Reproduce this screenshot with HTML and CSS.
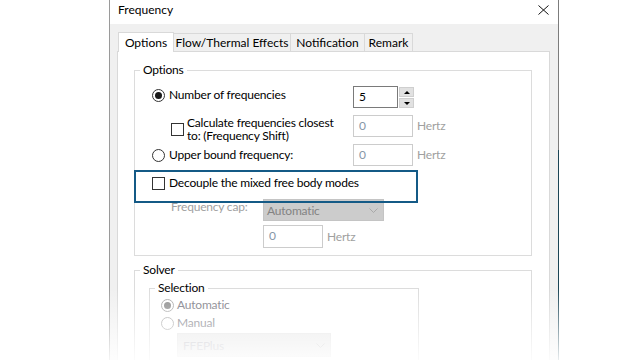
FILE: index.html
```html
<!DOCTYPE html>
<html>
<head>
<meta charset="utf-8">
<title>Frequency</title>
<link rel="stylesheet" href="styles.css">
</head>
<body>
<div class="screen">
  <div class="window">
    <div class="edge-left"></div>
    <div class="win-main">
      <div class="titlebar">
        <span class="title">Frequency</span>
        <svg class="close" width="11" height="10" viewBox="0 0 11 10"><path d="M0.5 0.5 L10.5 9.5 M10.5 0.5 L0.5 9.5" stroke="#111" stroke-width="1" fill="none"/></svg>
      </div>
      <div class="client">
        <div class="tabs">
          <div class="tab active t-options">Options</div>
          <div class="tab t-flow">Flow/Thermal Effects</div>
          <div class="tab t-notif">Notification</div>
          <div class="tab t-remark">Remark</div>
        </div>
        <div class="panel">
          <fieldset class="group options">
            <legend>Options</legend>
            <div class="row r1">
              <div class="col1">
                <label class="opt"><span class="radio checked"></span>Number of frequencies</label>
              </div>
              <div class="spin">
                <div class="field">5</div>
                <div class="spin-btns"><span class="sb"><span class="arr up"></span></span><span class="sb"><span class="arr down"></span></span></div>
              </div>
            </div>
            <div class="row r2">
              <div class="col1">
                <label class="chk-opt two"><span class="check"></span><span class="two-line">Calculate frequencies closest<br>to: (Frequency Shift)</span></label>
              </div>
              <div class="unit-input"><div class="field dis">0</div><span class="unit">Hertz</span></div>
            </div>
            <div class="row r3">
              <div class="col1">
                <label class="opt"><span class="radio"></span>Upper bound frequency:</label>
              </div>
              <div class="unit-input"><div class="field dis">0</div><span class="unit">Hertz</span></div>
            </div>
            <div class="row r4">
              <label class="opt"><span class="check"></span>Decouple the mixed free body modes</label>
              <div class="highlight"></div>
            </div>
            <div class="row r5">
              <div class="cap-label">Frequency cap:</div>
              <div class="combo dis-combo"><span>Automatic</span><svg width="9" height="5" viewBox="0 0 9 5"><path d="M0.5 0.5 L4.5 4.5 L8.5 0.5" fill="none" stroke="#a9a9a9"/></svg></div>
            </div>
            <div class="row r6">
              <div class="unit-input"><div class="field dis">0</div><span class="unit">Hertz</span></div>
            </div>
          </fieldset>
          <fieldset class="group solver">
            <legend>Solver</legend>
            <div class="solver-body">
              <fieldset class="group selection">
                <legend>Selection</legend>
                <div class="selection-body">
                  <label class="opt sm dis-opt auto"><span class="radio checked dis"></span>Automatic</label>
                  <label class="opt sm dis-opt manual"><span class="radio dis"></span>Manual</label>
                  <div class="combo ffe"><span>FFEPlus</span><svg width="9" height="5" viewBox="0 0 9 5"><path d="M0.5 0.5 L4.5 4.5 L8.5 0.5" fill="none" stroke="#c4c4c4"/></svg></div>
                </div>
              </fieldset>
            </div>
          </fieldset>
        </div>
      </div>
    </div>
    <div class="edge-right"></div>
  </div>
  <div class="fade"></div>
</div>
</body>
</html>
```
FILE: styles.css
```css
* { box-sizing: border-box; }
html, body { margin: 0; padding: 0; }
body {
  width: 640px;
  height: 360px;
  overflow: hidden;
  background: #fff;
  font-family: "Lato", "Noto Sans", sans-serif;
  font-size: 12px;
  color: #000;
}
.screen { position: relative; width: 640px; height: 360px; overflow: hidden; }
.window { display: flex; margin-left: 109px; width: 450px; height: 360px; }
.edge-left { width: 1px; flex: none; background: #9a9a9a; }
.edge-right { width: 1px; flex: none; background: linear-gradient(#7c7c7c 0, #7c7c7c 150px, #1b4556 150px, #1b4556 100%); }
.win-main { flex: 1; display: flex; flex-direction: column; background: #f0f0f0; min-width: 0; }

.titlebar {
  height: 24px; flex: none; background: #fff;
  display: flex; align-items: flex-start; justify-content: space-between;
  padding: 2px 9px 0 8px;
}
.title { line-height: 16px; }
.close { margin-top: 3px; }

.client { flex: 1; display: flex; flex-direction: column; padding: 0 8px 0 7px; }
.tabs { display: flex; align-items: flex-start; height: 18px; margin-top: 9px; padding-left: 1px; position: relative; z-index: 1; flex: none; }
.tab {
  height: 18px; line-height: 16px;
  display: flex; align-items: center; justify-content: center;
  border: 1px solid #d9d9d9; border-bottom: none; border-left: none;
  background: #f0f0f0; white-space: nowrap;
}
.tab.active { height: 20px; margin-top: -1px; background: #fff; border-left: 1px solid #d9d9d9; }
.t-options { width: 56px; }
.t-flow { width: 117px; }
.t-notif { width: 74px; }
.t-remark { width: 48px; }

.panel { flex: 1; background: #fff; border: 1px solid #d9d9d9; padding: 10px 17px 0 16px; letter-spacing: -0.2px; }

fieldset.group { border: 1px solid #dcdcdc; margin: 0; padding: 0; min-width: 0; }
fieldset.group > legend { padding: 0 3px; margin-left: 5px; line-height: 16px; }
fieldset.options { padding-bottom: 7px; }

.row { display: flex; align-items: flex-start; }
.col1 { width: 218px; flex: none; }
.opt { display: flex; align-items: center; gap: 4px; line-height: 16px; padding-left: 17px; white-space: nowrap; }
.chk-opt { display: flex; align-items: center; gap: 3px; padding-left: 36px; white-space: nowrap; }
.two-line { line-height: 13px; }

.radio {
  width: 13px; height: 13px; border-radius: 50%; border: 1px solid #333; background: #fff;
  display: grid; place-items: center; flex: none;
}
.radio.checked::after { content: ""; width: 7px; height: 7px; border-radius: 50%; background: #1a1a1a; }
.radio.dis { border-color: #a8a8a8; }
.radio.dis.checked::after { background: #8a8a8a; }
.check { width: 13px; height: 13px; border: 1px solid #333; background: #fff; flex: none; }

.field { height: 22px; border: 1px solid #7a7a7a; padding-left: 5px; line-height: 19px; background: #fff; }
.spin { display: flex; gap: 1px; align-items: flex-start; }
.spin .field { width: 45px; }
.spin-btns { display: flex; flex-direction: column; gap: 1px; margin-top: 1px; }
.sb { width: 15px; height: 10px; background: #e1e1e1; border: 1px solid #cfcfcf; display: grid; place-items: center; }
.arr { width: 0; height: 0; border-left: 3px solid transparent; border-right: 3px solid transparent; }
.arr.up { border-bottom: 3px solid #000; }
.arr.down { border-top: 3px solid #000; }

.unit-input { display: flex; align-items: center; gap: 4px; }
.field.dis { width: 60px; border-color: #cccccc; color: #8796a6; }
.unit { color: #a0a0a0; line-height: 16px; }

.r1 { margin-top: 8px; }
.r1 .opt { margin-top: 1px; }
.r2 { margin-top: 7px; }
.r2 .chk-opt { margin-top: 1px; }
.r3 { margin-top: 2px; align-items: center; }
.r4 { margin-top: 9px; position: relative; }
.highlight {
  position: absolute; left: -1px; top: -5px; width: 284px; height: 33px;
  border: 2px solid #145a86; pointer-events: none;
}
.r5 { margin-top: 8px; }
.cap-label { width: 128px; flex: none; padding-left: 36px; color: #a0a0a0; line-height: 16px; }
.combo { display: flex; align-items: center; justify-content: space-between; height: 22px; padding: 0 5px 0 3px; }
.dis-combo { width: 121px; background: #cccccc; border: 1px solid #c4c4c4; color: #838383; }
.r6 { margin-top: 4px; padding-left: 128px; }
.r6 .field { height: 23px; }

fieldset.solver { margin-top: 6px; }
.solver-body { padding: 2px 0 40px 14px; }
fieldset.selection { width: 270px; }
.selection-body { padding: 0 0 30px 11px; }
.opt.sm { gap: 3px; padding-left: 0; }
.dis-opt { color: #767680; }
.auto { margin-top: 1px; }
.manual { margin-top: 2px; }
.ffe { width: 154px; height: 24px; margin: 2px 0 0 16px; background: #e6e6e6; border: 1px solid #e0e0e0; color: #b4b4bc; padding-left: 5px; }

.fade {
  position: absolute; left: 0; right: 0; top: 288px; height: 72px;
  background: linear-gradient(rgba(255,255,255,0), rgba(255,255,255,0.9));
  pointer-events: none;
}
```
